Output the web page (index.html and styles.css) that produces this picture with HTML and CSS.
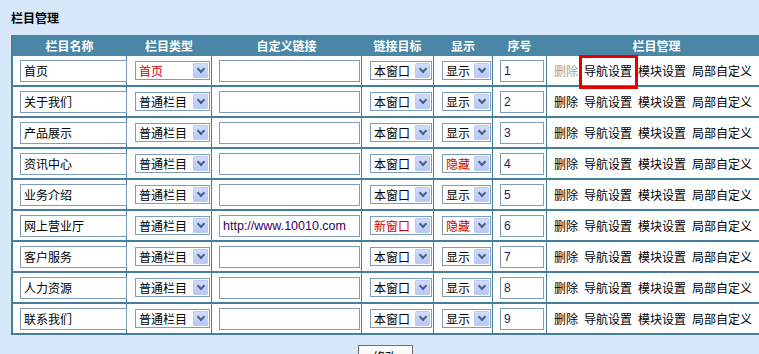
FILE: index.html
```html
<!DOCTYPE html>
<html lang="zh-CN">
<head>
    <meta charset="UTF-8">
    <title>栏目管理</title>
    <link rel="stylesheet" href="styles.css">
</head>
<body>

<div class="page">
    <h2 class="title">栏目管理</h2>

    <table class="col-table">
        <tr>
            <th class="c1">栏目名称</th>
            <th class="c2">栏目类型</th>
            <th class="c3">自定义链接</th>
            <th class="c4">链接目标</th>
            <th class="c5">显示</th>
            <th class="c6">序号</th>
            <th class="c7">栏目管理</th>
        </tr>
        <tr>
            <td><input class="txt name" type="text" value="首页"></td>
            <td><span class="sel sel-type red">首页<i class="sel-btn"></i></span></td>
            <td><input class="txt link" type="text" value=""></td>
            <td><span class="sel sel-target">本窗口<i class="sel-btn"></i></span></td>
            <td><span class="sel sel-show">显示<i class="sel-btn"></i></span></td>
            <td><input class="txt num" type="text" value="1"></td>
            <td class="ops"><span class="off">删除</span><span class="mark">导航设置<b class="mark-box"></b></span><a href="#">模块设置</a><a href="#">局部自定义</a></td>
        </tr>
        <tr>
            <td><input class="txt name" type="text" value="关于我们"></td>
            <td><span class="sel sel-type">普通栏目<i class="sel-btn"></i></span></td>
            <td><input class="txt link" type="text" value=""></td>
            <td><span class="sel sel-target">本窗口<i class="sel-btn"></i></span></td>
            <td><span class="sel sel-show">显示<i class="sel-btn"></i></span></td>
            <td><input class="txt num" type="text" value="2"></td>
            <td class="ops"><a href="#">删除</a><a href="#">导航设置</a><a href="#">模块设置</a><a href="#">局部自定义</a></td>
        </tr>
        <tr>
            <td><input class="txt name" type="text" value="产品展示"></td>
            <td><span class="sel sel-type">普通栏目<i class="sel-btn"></i></span></td>
            <td><input class="txt link" type="text" value=""></td>
            <td><span class="sel sel-target">本窗口<i class="sel-btn"></i></span></td>
            <td><span class="sel sel-show">显示<i class="sel-btn"></i></span></td>
            <td><input class="txt num" type="text" value="3"></td>
            <td class="ops"><a href="#">删除</a><a href="#">导航设置</a><a href="#">模块设置</a><a href="#">局部自定义</a></td>
        </tr>
        <tr>
            <td><input class="txt name" type="text" value="资讯中心"></td>
            <td><span class="sel sel-type">普通栏目<i class="sel-btn"></i></span></td>
            <td><input class="txt link" type="text" value=""></td>
            <td><span class="sel sel-target">本窗口<i class="sel-btn"></i></span></td>
            <td><span class="sel sel-show red">隐藏<i class="sel-btn"></i></span></td>
            <td><input class="txt num" type="text" value="4"></td>
            <td class="ops"><a href="#">删除</a><a href="#">导航设置</a><a href="#">模块设置</a><a href="#">局部自定义</a></td>
        </tr>
        <tr>
            <td><input class="txt name" type="text" value="业务介绍"></td>
            <td><span class="sel sel-type">普通栏目<i class="sel-btn"></i></span></td>
            <td><input class="txt link" type="text" value=""></td>
            <td><span class="sel sel-target">本窗口<i class="sel-btn"></i></span></td>
            <td><span class="sel sel-show">显示<i class="sel-btn"></i></span></td>
            <td><input class="txt num" type="text" value="5"></td>
            <td class="ops"><a href="#">删除</a><a href="#">导航设置</a><a href="#">模块设置</a><a href="#">局部自定义</a></td>
        </tr>
        <tr>
            <td><input class="txt name" type="text" value="网上营业厅"></td>
            <td><span class="sel sel-type">普通栏目<i class="sel-btn"></i></span></td>
            <td><input class="txt link url" type="text" value="http://www.10010.com"></td>
            <td><span class="sel sel-target red">新窗口<i class="sel-btn"></i></span></td>
            <td><span class="sel sel-show red">隐藏<i class="sel-btn"></i></span></td>
            <td><input class="txt num" type="text" value="6"></td>
            <td class="ops"><a href="#">删除</a><a href="#">导航设置</a><a href="#">模块设置</a><a href="#">局部自定义</a></td>
        </tr>
        <tr>
            <td><input class="txt name" type="text" value="客户服务"></td>
            <td><span class="sel sel-type">普通栏目<i class="sel-btn"></i></span></td>
            <td><input class="txt link" type="text" value=""></td>
            <td><span class="sel sel-target">本窗口<i class="sel-btn"></i></span></td>
            <td><span class="sel sel-show">显示<i class="sel-btn"></i></span></td>
            <td><input class="txt num" type="text" value="7"></td>
            <td class="ops"><a href="#">删除</a><a href="#">导航设置</a><a href="#">模块设置</a><a href="#">局部自定义</a></td>
        </tr>
        <tr>
            <td><input class="txt name" type="text" value="人力资源"></td>
            <td><span class="sel sel-type">普通栏目<i class="sel-btn"></i></span></td>
            <td><input class="txt link" type="text" value=""></td>
            <td><span class="sel sel-target">本窗口<i class="sel-btn"></i></span></td>
            <td><span class="sel sel-show">显示<i class="sel-btn"></i></span></td>
            <td><input class="txt num" type="text" value="8"></td>
            <td class="ops"><a href="#">删除</a><a href="#">导航设置</a><a href="#">模块设置</a><a href="#">局部自定义</a></td>
        </tr>
        <tr class="last">
            <td><input class="txt name" type="text" value="联系我们"></td>
            <td><span class="sel sel-type">普通栏目<i class="sel-btn"></i></span></td>
            <td><input class="txt link" type="text" value=""></td>
            <td><span class="sel sel-target">本窗口<i class="sel-btn"></i></span></td>
            <td><span class="sel sel-show">显示<i class="sel-btn"></i></span></td>
            <td><input class="txt num" type="text" value="9"></td>
            <td class="ops"><a href="#">删除</a><a href="#">导航设置</a><a href="#">模块设置</a><a href="#">局部自定义</a></td>
        </tr>
    </table>

    <div class="actions">
        <button type="button" class="btn">修改</button>
    </div>
</div>

</body>
</html>
```

FILE: styles.css
```css
html, body {
    margin: 0;
    padding: 0;
    background-color: #d6e8fa;
    overflow: hidden;
}
body {
    font-family: "Noto Sans CJK SC", "Liberation Sans", sans-serif;
    font-size: 12px;
    color: #000;
}
.page {
    padding: 11px 0 0 11px;
}
.title {
    margin: 0;
    height: 24px;
    font-size: 12px;
    font-weight: bold;
    line-height: 14px;
}

/* 栏目表格 */
.col-table {
    table-layout: fixed;
    border-collapse: separate;
    border-spacing: 0;
    width: 756px;
    background-color: #fff;
    border-left: 2px solid #467f9d;
}
.col-table th,
.col-table td {
    box-sizing: border-box;
    padding: 0;
    border-right: 1px solid #467f9d;
}
.col-table th {
    height: 21px;
    background-color: #4a87a6;
    border-right-color: #4a87a6;
    color: #fff;
    font-weight: bold;
    text-align: center;
    line-height: 14px;
}
.col-table td {
    height: 31px;
    border-bottom: 2px solid #467f9d;
    padding-left: 7px;
    vertical-align: middle;
    white-space: nowrap;
}
.c1 { width: 114px; }
.c2 { width: 85px; }
.c3 { width: 150px; }
.c4 { width: 72px; }
.c5 { width: 59px; }
.c6 { width: 54px; }
.c7 { width: 220px; }

/* 输入框 */
.txt {
    display: block;
    box-sizing: border-box;
    height: 22px;
    margin: 0;
    padding: 0 3px;
    border: 1px solid #7f9db9;
    background: #fff;
    font-family: "Noto Sans CJK SC", "Liberation Sans", sans-serif;
    font-size: 12px;
    color: #000;
    outline: none;
}
.name { width: 107px; }
.link { width: 141px; }
.num { width: 44px; color: #2a1a5c; font-family: "Liberation Sans", sans-serif; }
.url { color: #330066; font-family: "Liberation Sans", sans-serif; font-size: 12.5px; }

/* 下拉框 */
.sel {
    display: flex;
    align-items: center;
    justify-content: space-between;
    box-sizing: border-box;
    height: 19px;
    margin-left: 1px;
    padding: 0 1px 0 3px;
    border: 1px solid #7f9db9;
    background: #fff;
    line-height: 14px;
}
.sel-type { width: 75px; }
.sel-target { width: 62px; }
.sel-show { width: 49px; }
.red { color: #d40000; }
.sel-btn {
    position: relative;
    box-sizing: border-box;
    width: 15px;
    height: 15px;
    border: 1px solid #bccbf0;
    border-radius: 1px;
    background: linear-gradient(#d0dcfc, #b6c8f6);
}
.sel-btn::after {
    content: "";
    position: absolute;
    left: 4px;
    top: 2px;
    width: 4px;
    height: 4px;
    border-right: 2px solid #4d6185;
    border-bottom: 2px solid #4d6185;
    transform: rotate(45deg);
}

/* 操作 */
.ops {
    line-height: 14px;
}
.ops a,
.ops span {
    color: #000;
    text-decoration: none;
    margin-right: 6px;
}
.ops .off {
    color: #a3a3a3;
}
.mark {
    position: relative;
}
.mark-box {
    position: absolute;
    left: -5px;
    right: -6px;
    top: -7px;
    bottom: -10px;
    border: 3px solid #e60000;
    z-index: 2;
}

.actions {
    width: 748px;
    padding-top: 10px;
    text-align: center;
}
.btn {
    width: 55px;
    height: 22px;
    padding: 0;
    border: 1px solid #6f6f6f;
    background: linear-gradient(#ffffff, #ecebe6);
    font-family: "Noto Sans CJK SC", "Liberation Sans", sans-serif;
    font-size: 12px;
    color: #000;
}
```
